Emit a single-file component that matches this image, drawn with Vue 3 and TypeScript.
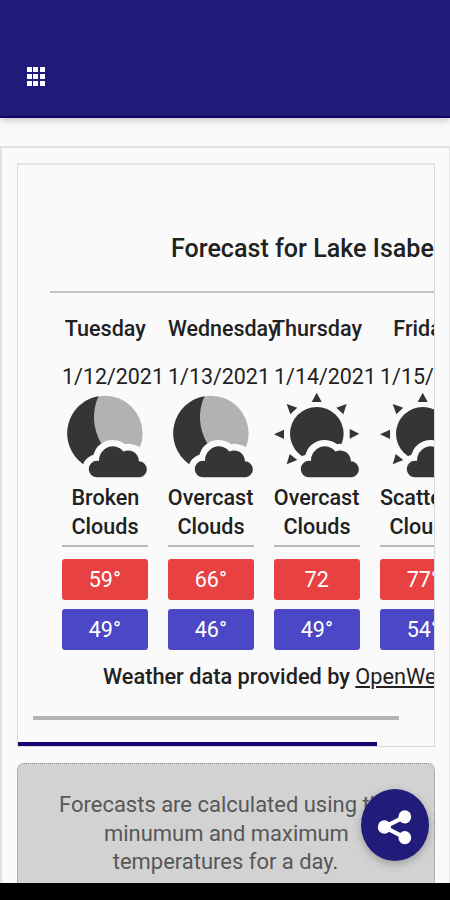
<script setup lang="ts">
interface Day {
  name: string
  date: string
  icon: 'moon' | 'sun'
  summary: string[]
  high: string
  low: string
}

const days: Day[] = [
  { name: 'Tuesday', date: '1/12/2021', icon: 'moon', summary: ['Broken', 'Clouds'], high: '59°', low: '49°' },
  { name: 'Wednesday', date: '1/13/2021', icon: 'moon', summary: ['Overcast', 'Clouds'], high: '66°', low: '46°' },
  { name: 'Thursday', date: '1/14/2021', icon: 'sun', summary: ['Overcast', 'Clouds'], high: '72', low: '49°' },
  { name: 'Friday', date: '1/15/2021', icon: 'sun', summary: ['Scattered', 'Clouds'], high: '77°', low: '54°' },
]

const noteLines: string[] = ['Forecasts are calculated using the', 'minumum and maximum', 'temperatures for a day.']

const rays: string[] = [
  '42.7,2.7 37.7,12 47.7,12',
  '85.3,43.7 75.7,39 75.7,48.7',
  '0,44.3 10,39.7 10,49',
  '72.7,14 62.3,17.7 69.3,24.3',
  '12.7,14 23.3,17.7 16.3,24.3',
  '12.7,74.3 15.7,64 23.3,70',
]

const cloud =
  'M35 87.3 A8.2 8.2 0 0 1 35 70.8 Q36 70.8 37 71 A13.8 13.8 0 0 1 61.5 61.5 A10.6 10.6 0 0 1 76.8 71.2 A8.1 8.1 0 0 1 78 87.3 Z'
</script>

<template>
  <div class="screen">
    <header class="bar">
      <div class="grid"><i v-for="n in 9" :key="n"></i></div>
    </header>

    <main class="panel">
      <section class="card">
        <h1 class="title"><span>Forecast for Lake Isabella</span></h1>
        <div class="rule"></div>
        <div class="days">
          <article v-for="day in days" :key="day.name" class="day">
            <div class="name" :class="{ wide: day.name.length > 8 }"><span>{{ day.name }}</span></div>
            <div class="date"><span>{{ day.date }}</span></div>
            <svg class="icon" viewBox="0 0 86 92" width="86" height="92">
              <template v-if="day.icon === 'moon'">
                <circle cx="42.9" cy="43.4" r="37.7" fill="#b2b2b2" />
                <path d="M36.5 6.2 C30 21 30 37 39.5 54 L32 80 L20.3 73.5 A37.7 37.7 0 0 1 36.5 6.2 Z" fill="#353535" />
                <path d="M60 58 Q70 51 81 59 L84 74 L60 80 Z" fill="#fafafa" />
              </template>
              <template v-else>
                <circle cx="42.8" cy="43.8" r="26.8" fill="#353535" />
                <polygon v-for="ray in rays" :key="ray" :points="ray" fill="#353535" />
              </template>
              <path :d="cloud" fill="#fafafa" stroke="#fafafa" stroke-width="12.8" stroke-linejoin="round" />
              <path :d="cloud" fill="#353535" />
            </svg>
            <div class="summary">
              <div v-for="line in day.summary" :key="line" :class="{ wide: line.length > 8 }">
                <span>{{ line }}</span>
              </div>
            </div>
            <div class="line"></div>
            <div class="temp high"><span>{{ day.high }}</span></div>
            <div class="temp low"><span>{{ day.low }}</span></div>
          </article>
        </div>
        <div class="credit"><span>Weather data provided by <u>OpenWeather</u></span></div>
        <div class="scroll"></div>
        <div class="progress"></div>
      </section>

      <section class="note">
        <div v-for="line in noteLines" :key="line"><span>{{ line }}</span></div>
      </section>
    </main>

    <button class="fab" aria-label="Share">
      <svg viewBox="0 0 68 72" width="68" height="72">
        <path d="M44 27.7 L23.3 38 L44 48.7" fill="none" stroke="#fff" stroke-width="4.2" />
        <ellipse cx="23.4" cy="38" rx="6.6" ry="6.8" fill="#fff" />
        <ellipse cx="43.8" cy="27.8" rx="6.4" ry="6.6" fill="#fff" />
        <ellipse cx="43.8" cy="48.7" rx="6.4" ry="6.6" fill="#fff" />
      </svg>
    </button>
    <footer class="nav"></footer>
  </div>
</template>

<style>
body {
  margin: 0;
}
</style>

<style scoped>
.screen {
  position: relative;
  display: flex;
  flex-direction: column;
  width: 450px;
  height: 900px;
  overflow: hidden;
  box-sizing: border-box;
  background: #fafafa;
  color: #212121;
  font-family: Roboto, 'Liberation Sans', sans-serif;
  font-size: 22.5px;
}
.screen * {
  box-sizing: border-box;
}
span {
  display: inline-block;
  white-space: nowrap;
}
.bar {
  flex: none;
  height: 118px;
  padding: 67px 0 0 26px;
  background: #211b79;
  border-bottom: 2px solid #100764;
  box-shadow: 0 2px 8px rgba(0, 0, 0, 0.22);
}
.grid {
  display: grid;
  grid-template-columns: repeat(3, 5px);
  gap: 1.7px;
  padding-left: 0.5px;
}
.grid i {
  height: 5.3px;
  background: #fff;
}
.panel {
  flex: 1;
  min-height: 0;
  overflow: hidden;
  margin-top: 28px;
  padding: 15px 14px 0 15px;
  border: 2px solid #e2e2e2;
  border-right-width: 1px;
  border-bottom: 0;
}
.card {
  display: flex;
  flex-direction: column;
  height: 584px;
  width: 418px;
  overflow: hidden;
  border: 1px solid #d9d9d9;
  border-top: 2px solid #e4e4e4;
}
.title {
  flex: none;
  height: 126px;
  margin: 0;
  padding: 66px 0 0 153px;
  font-size: 26px;
  line-height: 34px;
  font-weight: 500;
}
.title span {
  transform: scaleX(0.965);
  transform-origin: left;
}
.rule {
  flex: none;
  height: 2px;
  margin-left: 32px;
  background: #c4c4c4;
}
.days {
  flex: none;
  display: flex;
  gap: 20px;
  padding: 19px 0 0 44px;
}
.day {
  flex: none;
  width: 86px;
}
.name,
.date,
.summary,
.temp {
  text-align: center;
}
.name {
  height: 49px;
  line-height: 32px;
  font-weight: 500;
}
.name span,
.summary span,
.temp span {
  transform: scaleX(0.958);
}
.name:not(.wide) span {
  margin: 0 -20px;
}
.wide,
.date {
  text-align: left;
}
.name.wide span,
.date span {
  transform: scaleX(0.952);
  transform-origin: left;
}
.date {
  height: 29px;
  line-height: 30px;
}
.icon {
  display: block;
}
.summary {
  margin-top: 1px;
  height: 62px;
  line-height: 28.5px;
  font-weight: 500;
}
.summary div:not(.wide) span {
  margin: 0 -20px;
}
.summary .wide span {
  transform-origin: left;
}
.line {
  height: 2px;
  margin-bottom: 12px;
  background: #b9b9b9;
}
.temp {
  height: 41px;
  border-radius: 3px;
  line-height: 41px;
  color: #fff;
}
.high {
  margin-bottom: 9px;
  background: #e84142;
}
.low {
  background: #4b47c6;
}
.credit {
  flex: none;
  height: 66px;
  padding: 11px 0 0 85px;
  line-height: 30px;
  font-weight: 500;
}
.credit span {
  transform: scaleX(0.966);
  transform-origin: left;
}
.credit u {
  text-underline-offset: 2px;
  font-weight: 400;
}
.scroll {
  flex: none;
  width: 366px;
  height: 4px;
  margin-left: 15px;
  background: #b5b5b5;
}
.progress {
  flex: none;
  width: 359px;
  height: 4px;
  margin-top: auto;
  background: #16086e;
}
.note {
  width: 418px;
  height: 160px;
  margin-top: 16px;
  padding-top: 26px;
  border: 1px dotted #8a8a8a;
  border-radius: 7px;
  background: #d2d2d2;
  color: #575757;
  line-height: 28.5px;
  text-align: center;
}
.note span {
  transform: scaleX(0.976);
}
.fab {
  position: absolute;
  left: 361px;
  top: 789px;
  width: 68px;
  height: 72px;
  padding: 0;
  border: 0;
  border-radius: 50%;
  background: #211b79;
  box-shadow: 0 3px 8px rgba(0, 0, 0, 0.25);
}
.fab svg {
  display: block;
}
.nav {
  flex: none;
  height: 17px;
  background: #000;
}
</style>
